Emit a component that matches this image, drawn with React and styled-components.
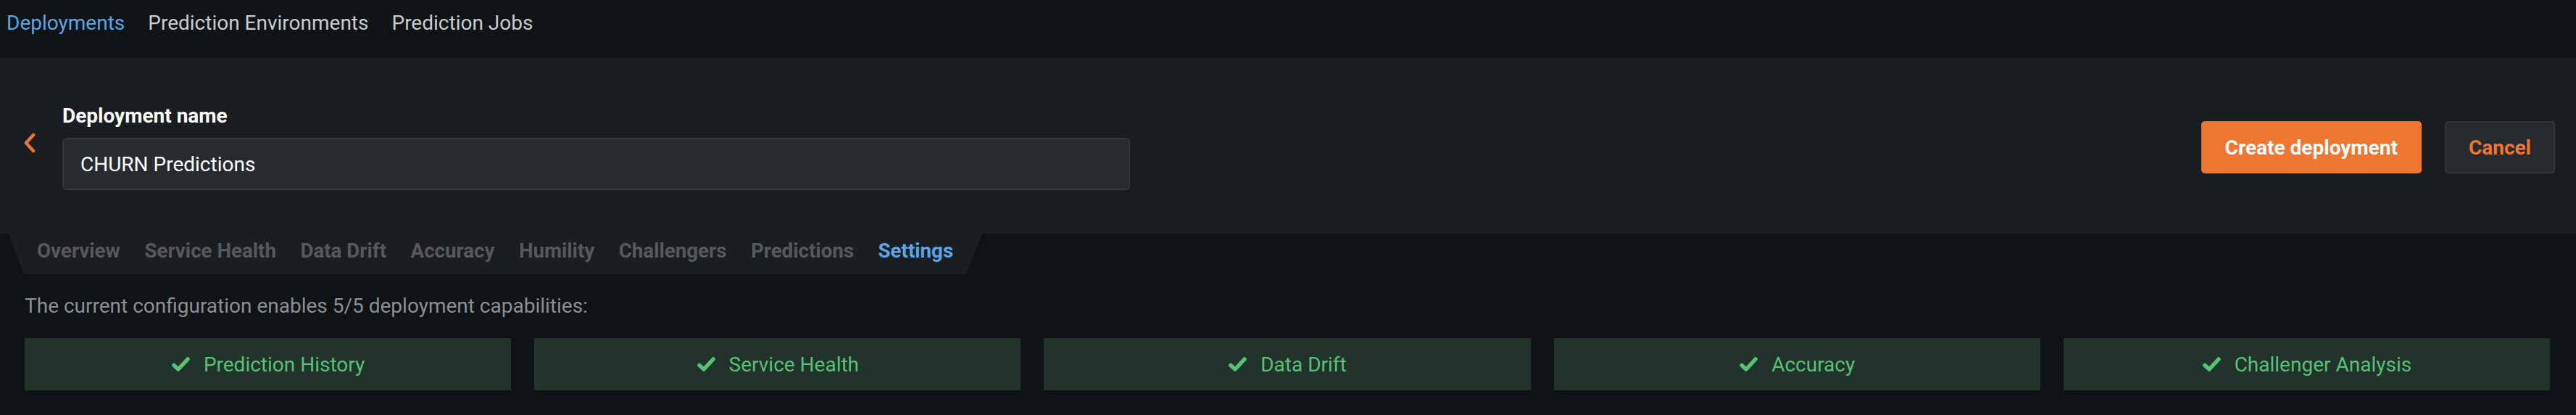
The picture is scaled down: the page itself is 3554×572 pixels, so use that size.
import styled, { createGlobalStyle } from 'styled-components';

const GlobalStyle = createGlobalStyle`
	body {
		margin: 0;
		background: #0f1316;
		font-family: Roboto, 'Liberation Sans', sans-serif;
	}
`;

const navItems = ['Deployments', 'Prediction Environments', 'Prediction Jobs'];
const tabs = ['Overview', 'Service Health', 'Data Drift', 'Accuracy', 'Humility', 'Challengers', 'Predictions', 'Settings'];
const capabilities = ['Prediction History', 'Service Health', 'Data Drift', 'Accuracy', 'Challenger Analysis'];

const CheckIcon = () => (
	<svg width="27" height="22" viewBox="0 0 27 22">
		<path d="M4 12.5 L10 18 L23 4" fill="none" stroke="currentColor" strokeWidth="5.5" strokeLinecap="round" strokeLinejoin="round" />
	</svg>
);

const ChevronLeft = () => (
	<svg width="18" height="28" viewBox="0 0 18 28">
		<path d="M14 3 L4 14 L14 25" fill="none" stroke="currentColor" strokeWidth="4.5" strokeLinecap="round" strokeLinejoin="round" />
	</svg>
);

export default function App() {
	return (
		<Page>
			<GlobalStyle />
			<TopNav>
				{navItems.map((item, i) => (
					<NavLink key={item} $active={i === 0}>
						{item}
					</NavLink>
				))}
			</TopNav>
			<Header>
				<FormSide>
					<BackButton>
						<ChevronLeft />
					</BackButton>
					<Field>
						<Label>Deployment name</Label>
						<NameBox>CHURN Predictions</NameBox>
					</Field>
				</FormSide>
				<Actions>
					<PrimaryButton>Create deployment</PrimaryButton>
					<CancelButton>Cancel</CancelButton>
				</Actions>
			</Header>
			<TabBar>
				{tabs.map((tab) => (
					<Tab key={tab} $active={tab === 'Settings'}>
						{tab}
					</Tab>
				))}
			</TabBar>
			<Content>
				<Description>The current configuration enables 5/5 deployment capabilities:</Description>
				<Cards>
					{capabilities.map((cap) => (
						<Card key={cap}>
							<CheckIcon />
							<span>{cap}</span>
						</Card>
					))}
				</Cards>
			</Content>
		</Page>
	);
}

const Page = styled.div`
	width: 3554px;
	min-height: 572px;
	background: #0f1316;
`;

const TopNav = styled.nav`
	display: flex;
	gap: 32px;
	height: 80px;
	box-sizing: border-box;
	padding: 16px 9px 0;
	background: #101417;
`;

const NavLink = styled.a`
	font-size: 28px;
	line-height: 32px;
	color: ${(p) => (p.$active ? '#5ba6e5' : '#c9cbcc')};
	cursor: pointer;
`;

const Header = styled.header`
	display: flex;
	align-items: center;
	justify-content: space-between;
	padding: 64px 29px 60px 32px;
	background: #1b1e21;
`;

const FormSide = styled.div`
	display: flex;
	align-items: flex-start;
`;

const BackButton = styled.button`
	display: flex;
	padding: 0;
	margin: 39px 36px 0 0;
	border: none;
	background: none;
	color: #ee7631;
	cursor: pointer;
`;

const Field = styled.div`
	display: flex;
	flex-direction: column;
	gap: 14px;
	width: 1473px;
`;

const Label = styled.label`
	font-size: 28px;
	line-height: 32px;
	font-weight: 700;
	color: #ffffff;
`;

const NameBox = styled.div`
	display: flex;
	align-items: center;
	height: 72px;
	box-sizing: border-box;
	padding: 0 23px;
	border: 2px solid #33373a;
	border-radius: 6px;
	background: #272b2f;
	font-size: 28px;
	color: #ffffff;
`;

const Actions = styled.div`
	display: flex;
	gap: 32px;
`;

const PrimaryButton = styled.button`
	height: 72px;
	padding: 0 33px;
	border: none;
	border-radius: 5px;
	background: #ee7631;
	font-family: inherit;
	font-size: 28px;
	font-weight: 700;
	color: #ffffff;
	cursor: pointer;
`;

const CancelButton = styled(PrimaryButton)`
	padding: 0 31px;
	border: 2px solid #33373a;
	background: #272b2f;
	color: #ee7631;
`;

const TabBar = styled.div`
	display: flex;
	gap: 33.5px;
	width: fit-content;
	height: 56px;
	box-sizing: border-box;
	margin-left: 12px;
	padding: 8px 40px 0 39px;
	background: #1b1e21;
	clip-path: polygon(0 0, 100% 0, calc(100% - 22px) 100%, 21px 100%);
`;

const Tab = styled.a`
	font-size: 27.7px;
	line-height: 32px;
	font-weight: 700;
	color: ${(p) => (p.$active ? '#5aa5e5' : '#55595c')};
	cursor: pointer;
`;

const Content = styled.main`
	padding: 28px 36px 34px 34px;
`;

const Description = styled.p`
	margin: 0 0 28px;
	font-size: 28px;
	line-height: 32px;
	color: #8c8f92;
`;

const Cards = styled.div`
	display: grid;
	grid-template-columns: repeat(5, 1fr);
	gap: 32px;
`;

const Card = styled.div`
	display: flex;
	align-items: center;
	justify-content: center;
	gap: 18px;
	height: 72px;
	background: #22332c;
	font-size: 28px;
	color: #55c274;
`;
